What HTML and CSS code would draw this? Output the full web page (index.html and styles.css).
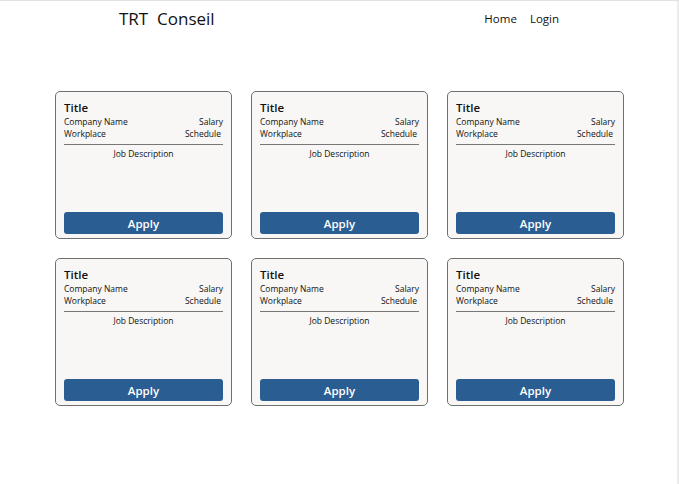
FILE: index.html
```html
<!DOCTYPE html>
<html lang="en">
<head>
<meta charset="utf-8">
<title>TRT Conseil</title>
<link rel="stylesheet" href="styles.css">
</head>
<body>
<div class="page">
  <header class="header">
    <div class="logo">TRT&nbsp; Conseil</div>
    <nav class="nav">
      <a href="#">Home</a>
      <a href="#">Login</a>
    </nav>
  </header>
  <main class="grid">
    <div class="card">
      <div class="title">Title</div>
      <div class="row"><span>Company Name</span><span>Salary</span></div>
      <div class="row"><span>Workplace</span><span class="sched">Schedule</span></div>
      <div class="desc">Job Description</div>
      <button class="apply">Apply</button>
    </div>
    <div class="card">
      <div class="title">Title</div>
      <div class="row"><span>Company Name</span><span>Salary</span></div>
      <div class="row"><span>Workplace</span><span class="sched">Schedule</span></div>
      <div class="desc">Job Description</div>
      <button class="apply">Apply</button>
    </div>
    <div class="card">
      <div class="title">Title</div>
      <div class="row"><span>Company Name</span><span>Salary</span></div>
      <div class="row"><span>Workplace</span><span class="sched">Schedule</span></div>
      <div class="desc">Job Description</div>
      <button class="apply">Apply</button>
    </div>
    <div class="card">
      <div class="title">Title</div>
      <div class="row"><span>Company Name</span><span>Salary</span></div>
      <div class="row"><span>Workplace</span><span class="sched">Schedule</span></div>
      <div class="desc">Job Description</div>
      <button class="apply">Apply</button>
    </div>
    <div class="card">
      <div class="title">Title</div>
      <div class="row"><span>Company Name</span><span>Salary</span></div>
      <div class="row"><span>Workplace</span><span class="sched">Schedule</span></div>
      <div class="desc">Job Description</div>
      <button class="apply">Apply</button>
    </div>
    <div class="card">
      <div class="title">Title</div>
      <div class="row"><span>Company Name</span><span>Salary</span></div>
      <div class="row"><span>Workplace</span><span class="sched">Schedule</span></div>
      <div class="desc">Job Description</div>
      <button class="apply">Apply</button>
    </div>
  </main>
</div>
</body>
</html>
```
FILE: styles.css
```css
html, body {
  margin: 0;
  padding: 0;
  background: #fff;
}
body {
  font-family: "Open Sans", "Noto Sans", sans-serif;
  color: #111;
}
.page {
  box-sizing: border-box;
  height: 484px;
  border-top: 1px solid #e2e2e2;
  box-shadow: inset -2px 0 0 #ececec;
}
.header {
  display: flex;
  justify-content: space-between;
  align-items: center;
  height: 35px;
  padding: 0 120px 0 119px;
}
.logo {
  font-size: 17px;
  color: #111;
}
.nav {
  display: flex;
  gap: 13px;
}
.nav a {
  font-size: 11.5px;
  color: #111;
  text-decoration: none;
}
.grid {
  display: grid;
  grid-template-columns: repeat(3, 177px);
  grid-auto-rows: 148px;
  gap: 19px 19px;
  justify-content: start;
  padding: 55px 0 0 55px;
}
.card {
  box-sizing: border-box;
  border: 1px solid #6f6f6f;
  border-radius: 5px;
  background: #f8f7f5;
  padding: 8px 8px 4px 8px;
  display: flex;
  flex-direction: column;
}
.title {
  font-size: 11.5px;
  font-weight: 600;
  line-height: 16px;
}
.row {
  display: flex;
  justify-content: space-between;
  font-size: 8.5px;
  line-height: 11.5px;
}
.sched {
  padding-right: 2px;
}
.desc {
  border-top: 1px solid #777;
  margin-top: 5px;
  padding-top: 3px;
  text-align: center;
  font-size: 8.5px;
  line-height: 12px;
  flex: 1;
}
.apply {
  height: 22px;
  border: none;
  border-radius: 3px;
  background: #2a5d91;
  color: #fff;
  font-family: "Open Sans", "Noto Sans", sans-serif;
  font-size: 11.5px;
  font-weight: 600;
  padding: 0;
}
```
